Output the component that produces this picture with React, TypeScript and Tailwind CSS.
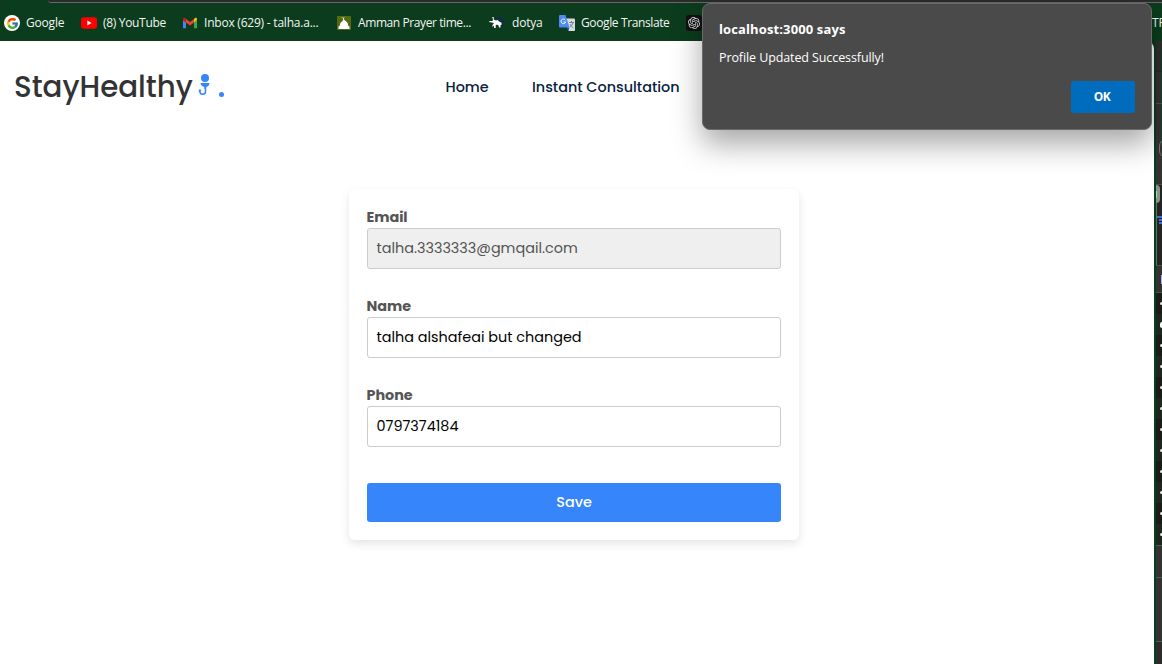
import type { ReactNode } from "react";
import { FcGoogle } from "react-icons/fc";
import { SiOpenai } from "react-icons/si";

const pop = "font-['Poppins','Inter',sans-serif] [font-feature-settings:'cv11','ss03'] whitespace-nowrap";
const segoe = "font-['Segoe_UI','Open_Sans','Noto_Sans',sans-serif] whitespace-nowrap";

function Bookmark({ icon, label, width, className }: { icon: ReactNode; label: string; width: string; className: string }) {
  return (
    <div className={`flex h-4 shrink-0 items-center ${width}`}>
      <span className="mr-[6px] flex h-4 w-4 shrink-0 items-center justify-center">{icon}</span>
      <span className={`text-[12px] leading-4 text-[#f2f5f3] ${segoe} ${className}`}>{label}</span>
    </div>
  );
}

function YouTubeIcon() {
  return (
    <svg width="16" height="16" viewBox="0 0 16 16">
      <rect y="2.3" width="16" height="11.4" rx="2.6" fill="#f00" />
      <path d="M6.3 5.5 10.6 8l-4.3 2.5z" fill="#fff" />
    </svg>
  );
}

function GmailIcon() {
  return (
    <svg width="16" height="16" viewBox="0 0 16 16">
      <path d="M1 5v8.2h3V7.2z" fill="#4285f4" />
      <path d="M15 5v8.2h-3V7.2z" fill="#34a853" />
      <path d="M12 4.2v3.3l3-2.2V4c0-1.4-1.4-1.6-2.2-.9z" fill="#fbbc04" />
      <path d="M1 4v1.4l3 2.2V4.2L3.2 3C2.300 2.300 1 2.800 1 4z" fill="#c5221f" />
      <path d="M4 4v3.600l4 3 4-3V4L8 7z" fill="#ea4335" />
    </svg>
  );
}

function MosqueIcon() {
  return (
    <svg width="14" height="14" viewBox="0 0 14 14">
      <rect width="14" height="14" fill="#536a12" />
      <path d="M4.300 1c1 .9 2.200 1 3.700.2L6.900 2.500v1.100c.6.900 1.500 1.200 2.500 2.100 1.300 1 1.900 2.300 1.700 4l1.400.8V13h-11v-2.500l1.400-.8c-.2-1.700.4-3 1.700-4 .8-.7 1.400-1 1.600-1.900V2.600C5.400 2.300 4.700 1.800 4.300 1z" fill="#fff" />
    </svg>
  );
}

function DotyaIcon() {
  return (
    <svg width="16" height="14" viewBox="0 0 16 14">
      <path d="M8 1.500h3.500V3L13.500 1.500v2.500L15.800 4.500v2H13.500L14 9h-1.500l-.5 2h-2L8 7z" fill="#11284f" />
      <path d="M3.300 1h1.400v2.500L7 4.500 8.500 4l2.300 2 1.700.5V9h-1v2.500H10L9.500 9.500 8 8.500 6.700 9.500V12H5V9.500L3.500 11v-2L5 7 .3 6V5h3L4 4z" fill="#fff" />
    </svg>
  );
}

function TranslateIcon() {
  return (
    <svg width="16" height="16" viewBox="0 0 16 16">
      <path d="M6 3.500h9a1 1 0 0 1 1 1V15a1 1 0 0 1-1 1H9.500z" fill="#dcdcdc" />
      <path d="M1 0h5.500l4 12.500H1a1 1 0 0 1-1-1V1a1 1 0 0 1 1-1z" fill="#4c8bf5" />
      <path d="M7.500 12.500h3L9.400 16z" fill="#1a57c8" />
      <path d="M6.300 5.100A2.300 2.300 0 1 0 6.600 7H4.600" fill="none" stroke="#fff" strokeWidth="1" />
      <path d="M10 7.500h5M12.500 6v1.500M14 7.500c-.5 2.500-2 3.700-3 4.500M11 9c.8 2 2 3 3.500 4" fill="none" stroke="#607d8b" strokeWidth=".9" />
    </svg>
  );
}

function StethoscopeMark() {
  return (
    <svg className="mt-[33px] ml-[5px] h-[22px] w-[14px] shrink-0" viewBox="0 0 14 22" fill="#3685fb">
      <circle cx="7" cy="4" r="4" />
      <path d="M2.500 9h9c0 2-1.500 3.700-3.500 4.200V15H6.400v-1.800C4.300 12.700 2.700 11 2.500 9z" />
      <path d="M7.500 13v4.500a2.800 2.800 0 0 1-5.600 0v-.8" fill="none" stroke="#3685fb" strokeWidth="1.500" />
      <path d="M.2 17.200 2 14.700l1.500 2.500z" />
    </svg>
  );
}

function Field({ label, value, disabled }: { label: string; value: string; disabled?: boolean }) {
  return (
    <div className="mb-[26px]">
      <div className={`-ml-[0.5px] h-[22px] text-[14.4px] leading-[22px] font-bold tracking-[-0.05px] text-[#555] ${pop}`}>{label}</div>
      <div className={`flex h-[41px] items-center rounded-[3px] border border-[#ccc] px-[8.5px] text-[14.4px] ${disabled ? "bg-[#efefef] text-[#545454]" : "bg-white text-black"} ${pop}`}>
        {value}
      </div>
    </div>
  );
}

const rows = Array.from({ length: 12 }, (_, i) => i);

function DevTools() {
  return (
    <div className="flex w-[6px] shrink-0 flex-col overflow-hidden bg-[#333]">
      <div className="h-[31px] border-b border-[#292929] bg-[#2f2f2f]" />
      <div className="h-8 border-b border-[#525252]" />
      <div className="flex h-[81px] items-center border-b border-[#3d5a46] pt-[8px] pl-[3px]">
        <div className="h-[19px] w-5 shrink-0 rounded-[7px] border border-[#777]" />
      </div>
      <div className="flex h-[81px] flex-col border-b border-[#3d5a46] bg-[#242424]">
        <div className="flex h-[18px] w-1 items-center rounded-r-sm bg-[#8b918b]">
          <div className="h-[7px] w-[1px] bg-[#8fe89f]" />
        </div>
        <div className="flex flex-1 flex-col border-l border-[#5b745f] pt-[13px]">
          <div className="h-[2px] bg-[#3e70d6]" />
          <div className="mt-px ml-[2px] h-[2px] bg-[#3e70d6]" />
          <div className="mt-px ml-[2px] h-[2px] bg-[#3e70d6]" />
        </div>
      </div>
      <div className="flex h-[27px] shrink-0 items-center justify-end border-b border-[#3d5a46]">
        <div className="h-[9px] w-px bg-[#a7b5ff]" />
      </div>
      {rows.map((i) => (
        <div key={i} className={`flex h-[21px] shrink-0 items-center justify-end ${i % 2 ? "bg-[#1e2620]" : "bg-[#191d19]"}`}>
          <div className={i === 1 ? "h-[6px] w-[2px] rounded-l bg-white" : "h-[3px] w-[2px] rounded-l bg-[#e8e8e8]"} />
        </div>
      ))}
      <div className="h-[32px] border-t border-[#46604d]" />
      <div className="h-[64px] border-t border-[#46604d]" />
      <div className="flex-1 border-t border-[#46604d] bg-[#2c2c2c]" />
    </div>
  );
}

export default function App() {
  return (
    <div className="relative flex h-[664px] w-[1162px] flex-col overflow-hidden bg-[#0b3c1d]">
      <div className="flex h-[3px] shrink-0 justify-end">
        <div className="h-[3px] w-[1114px] rounded-bl-[8px] border-b border-[#686868] bg-[#2b2b2b]" />
      </div>
      <header className="flex h-[38px] shrink-0 items-center pt-[2px] pl-1">
        <Bookmark width="w-[77px]" icon={<span className="flex h-4 w-4 items-center justify-center rounded-full bg-white"><FcGoogle size={13} /></span>} label="Google" className="tracking-[-0.2px]" />
        <Bookmark width="w-[101px]" icon={<YouTubeIcon />} label="(8) YouTube" className="tracking-[-0.32px]" />
        <Bookmark width="w-[154px]" icon={<GmailIcon />} label="Inbox (629) - talha.a..." className="tracking-[-0.22px]" />
        <Bookmark width="w-[153px]" icon={<MosqueIcon />} label="Amman Prayer time..." className="tracking-[-0.41px]" />
        <Bookmark width="w-[70px]" icon={<DotyaIcon />} label="dotya" className="pl-px tracking-[-0.2px]" />
        <Bookmark width="w-[127px]" icon={<TranslateIcon />} label="Google Translate" className="tracking-[-0.38px]" />
        <span className="flex h-4 w-4 items-center justify-center rounded-[3px] bg-[#111]"><SiOpenai size={12} color="#e5e5e5" /></span>
        <span className={`ml-auto w-[10px] overflow-hidden text-[12px] leading-4 text-[#f2f5f3] ${segoe}`}>TF</span>
      </header>
      <div className="flex min-h-0 flex-1 justify-between">
        <main className="flex w-[1154px] flex-col rounded-tr-[8px] bg-white">
          <nav className="flex h-[92px] shrink-0">
            <div className="flex w-[445px] items-start pl-[14px]">
              <span className={`w-[179px] pt-[24px] text-[29.300px] leading-[44px] font-medium text-[#333] ${pop}`}>StayHealthy</span>
              <StethoscopeMark />
              <span className="mt-[51px] ml-[7px] h-[5px] w-[5px] rounded-full bg-[#3685fb]" />
            </div>
            <span className={`w-[87px] pl-[0.5px] text-[14.4px] leading-[92px] font-medium text-[#08213f] ${pop}`}>Home</span>
            <span className={`text-[14.4px] leading-[92px] font-medium text-[#08213f] ${pop}`}>Instant Consultation</span>
          </nav>
          <form className="mt-[56px] ml-[349px] flex h-[351px] w-[450px] flex-col rounded-[6px] bg-white px-[18px] pt-[17px] shadow-[0_4px_10px_rgba(0,0,0,0.1)]">
            <Field label="Email" value="talha.3333333@gmqail.com" disabled />
            <Field label="Name" value="talha alshafeai but changed" />
            <Field label="Phone" value="0797374184" />
            <button type="button" className={`mt-[10px] h-[39px] rounded-[3px] bg-[#3685fb] text-[14.4px] font-medium text-white ${pop}`}>Save</button>
          </form>
        </main>
        <DevTools />
      </div>
      <div className={`absolute top-[3px] left-[702px] flex h-[127px] w-[450px] flex-col rounded-[8px] border border-[#6a6a6a] bg-[#4a4a4a] px-4 text-white shadow-[0_14px_30px_rgba(0,0,0,0.35)] ${segoe}`}>
        <div className="mt-[15px] text-[13px] leading-[20px] font-bold tracking-[0.12px]">localhost:3000 says</div>
        <div className="mt-[9px] text-[12.500px] leading-[20px] tracking-[-0.1px]">Profile Updated Successfully!</div>
        <button type="button" className="mt-[13px] h-8 w-16 self-end rounded-[3px] bg-[#006cbe] pr-[2px] text-[12px] font-bold tracking-[-0.4px]">OK</button>
      </div>
    </div>
  );
}
